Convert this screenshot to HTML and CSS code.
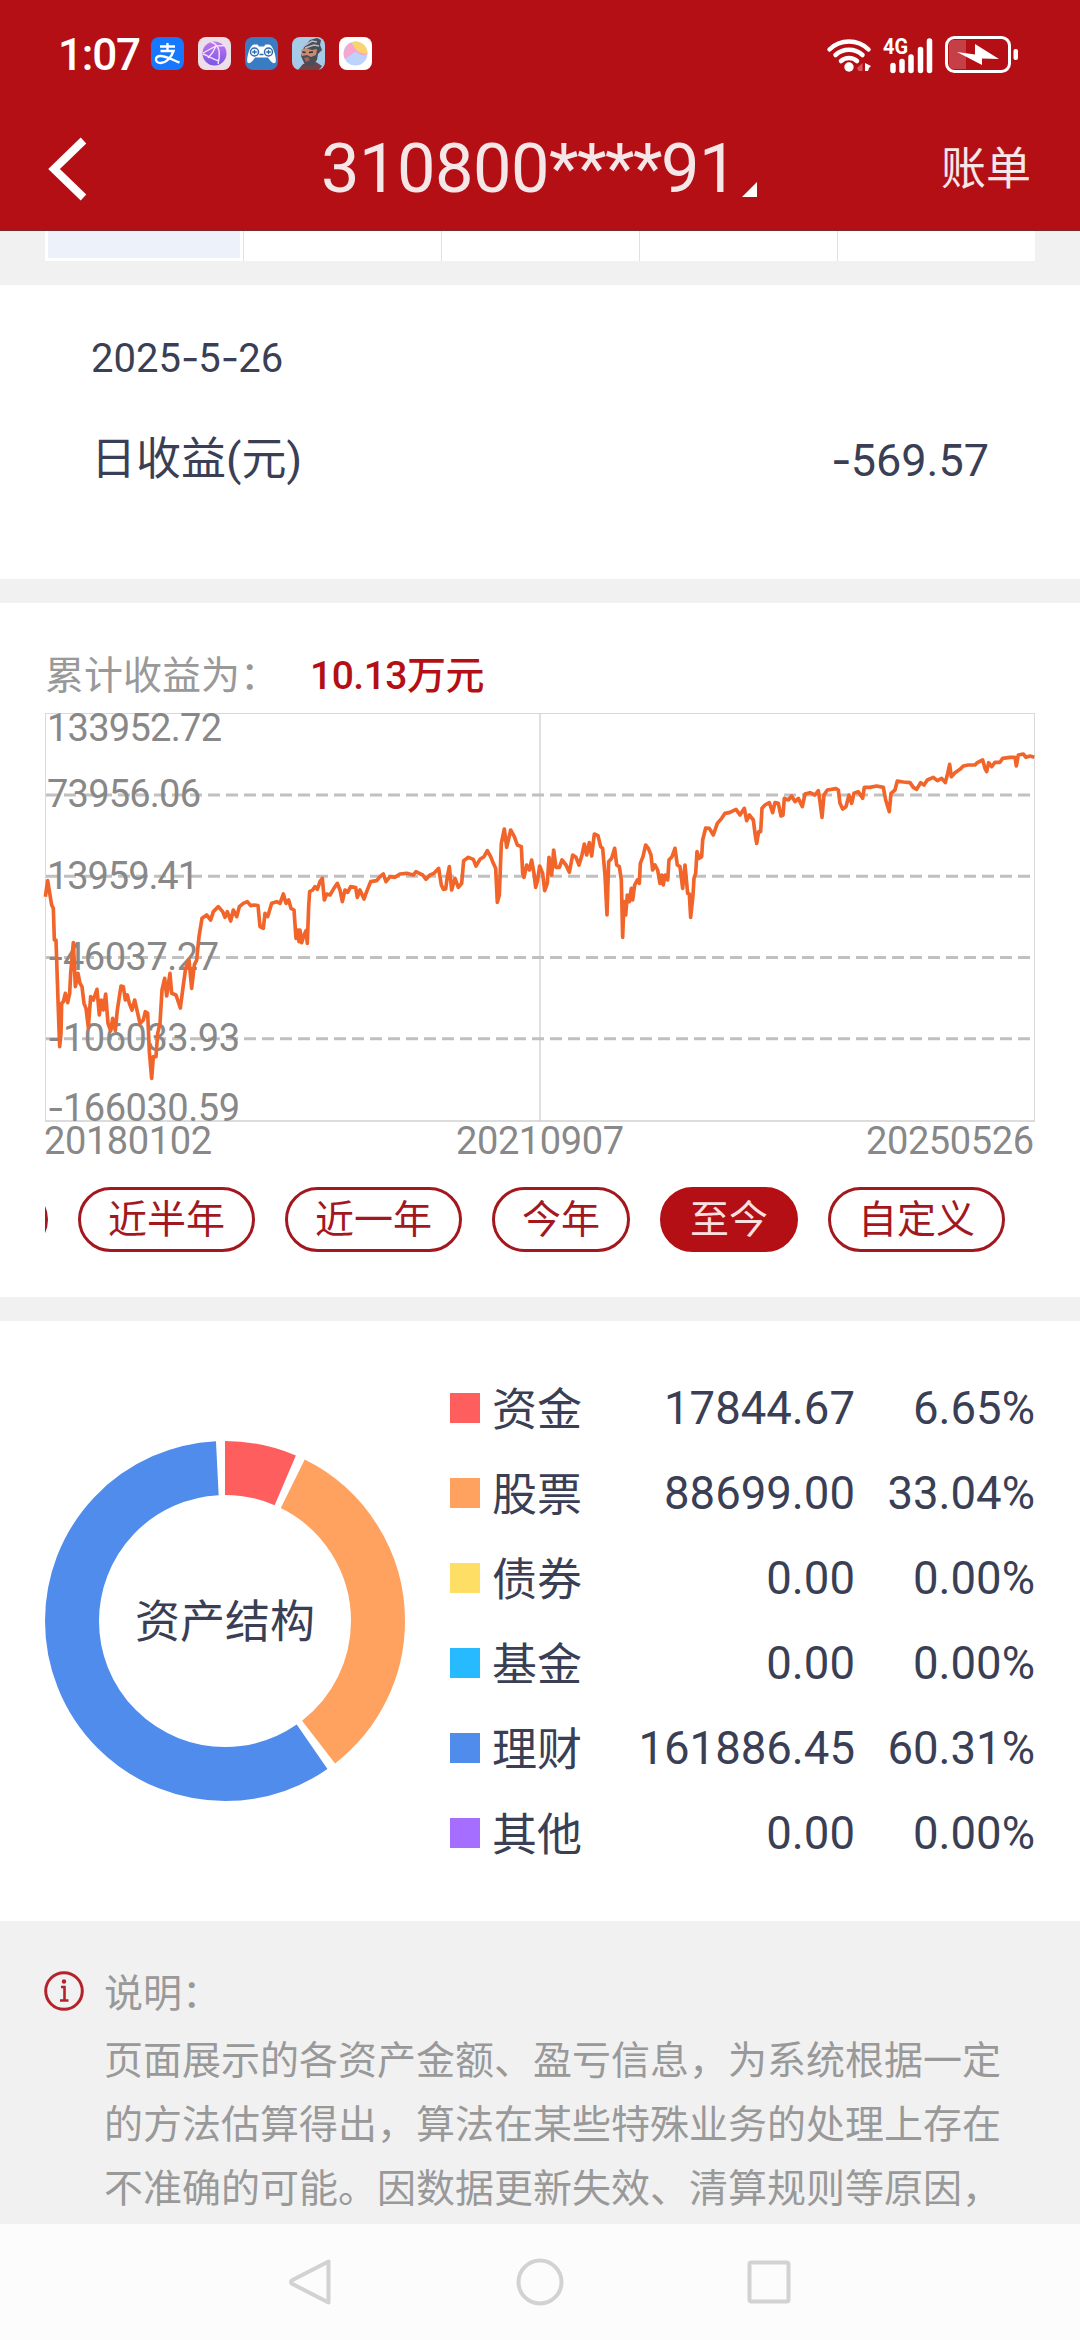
FILE: index.html
```html
<!DOCTYPE html>
<html lang="zh-CN">
<head>
  <meta charset="UTF-8">
  <meta name="viewport" content="width=device-width, initial-scale=1.0">
  <title>账单</title>
  <link rel="stylesheet" href="styles.css">
</head>
<body>
  <header class="header">
    <div class="status-bar">
      <span class="time">1:07</span>
      <div class="apps">
        <svg viewBox="0 0 33 33">
          <rect width="33" height="33" rx="8" fill="#1677ff"/>
          <path d="M9 9.500h15M16.500 6v8M9.500 14h13c-2 6-7 12-13 12-6 0-6-7 0-7 6 0 12 4 19 6.500" fill="none" stroke="#fff" stroke-width="2.400"/>
        </svg>
        <svg viewBox="0 0 33 33">
          <rect width="33" height="33" rx="8" fill="#ecdfe9"/>
          <circle cx="16.500" cy="16.500" r="12" fill="url(#globe)"/>
          <path d="M5 16L18 9l9.500-.500M5 17c5 2 10 5 16 7M13 5c3 1 5 2.500 6 4 3 4 3 10 1 18M18 9c-2 5-4 8-8 12" fill="none" stroke="#f1e4fb" stroke-width="1.400"/>
          <defs>
            <linearGradient id="globe" x1="0" y1="0" x2="0" y2="1">
              <stop offset="0" stop-color="#c277f0"/>
              <stop offset="1" stop-color="#7b55e6"/>
            </linearGradient>
          </defs>
        </svg>
        <svg viewBox="0 0 33 33">
          <rect width="33" height="33" rx="8" fill="#3a7cc4"/>
          <path d="M9 7.500h3.500l1.500 2h5l1.500-2H24c4 0 8 14 6.500 18-2 2-5-1-7.500-5H10c-2.500 4-5.500 7-7.500 5C1 21.500 5 7.500 9 7.500z" fill="#fff"/>
          <circle cx="9.500" cy="15" r="4" fill="#fff" stroke="#2f6bb0" stroke-width="1.500"/>
          <circle cx="23.500" cy="15" r="4" fill="#fff" stroke="#2f6bb0" stroke-width="1.500"/>
          <path d="M9.500 12.700v4.600M7.200 15h4.600M23.500 12.700v4.600M21.200 15h4.600M14.500 17.500h4" stroke="#2f6bb0" stroke-width="1.300"/>
        </svg>
        <svg viewBox="0 0 33 33">
          <rect width="33" height="33" rx="8" fill="#a5cbe8"/>
          <path d="M6 33l5-6 13-2 6 4-3 4z" fill="#6b454a"/>
          <path d="M12 10l6-7 7-2 4 2-1 5 2 5-4 4-1 6-5 6-7-1-4-9z" fill="#4a4e57"/>
          <path d="M9 13l5-2 6 2 5-1-1 6-5 2-4-2-5 1z" fill="#c98a72"/>
          <path d="M12 9l8-5 5 1M13 11l9-3 5 1" stroke="#b7bcc3" stroke-width="1.500" fill="none"/>
          <path d="M10.500 15l3 .500M17 15.500l4-.500" stroke="#33282b" stroke-width="1.500"/>
          <path d="M12 21l4-1 2 3-4 2z" fill="#a9615a"/>
        </svg>
        <svg viewBox="0 0 33 33">
          <rect width="33" height="33" rx="8" fill="#fff"/>
          <circle cx="16.500" cy="16.500" r="12" fill="#bcd3fb"/>
          <path d="M12 5.500c4 6 8 10 16.500 11-3 4-8 1-12-2L6 22C3 16 6 8 12 5.500z" fill="#f6a6cf"/>
          <path d="M13 5a12 12 0 0 1 15.500 11C21 18 15 12 13 5z" fill="#fbd36f"/>
        </svg>
      </div>
      <svg class="signals" viewBox="820 30 205 46">
        <g fill="none" stroke="#fff" stroke-width="4.500" stroke-linecap="round">
          <path d="M829.500 48.500a28 28 0 0 1 39 0M835.500 54a20 20 0 0 1 27 0M841 60a12 12 0 0 1 16 0"/>
          <path d="M893 64.500v5M902 60.500v9M911 56v13.500M920.500 48.500v21M929.500 40v29.500" stroke-width="5.500"/>
          <rect x="946.500" y="36.500" width="63" height="34" rx="8" stroke-width="3"/>
        </g>
        <circle cx="849" cy="66" r="4.700" fill="#fff"/>
        <path d="M862.500 62v8h-4l-1.500-3z" fill="#d9555a"/>
        <path d="M865 62l6 3-2 2-1 3h-3z" fill="#fff"/>
        <path d="M954 39h12v29h-12q-5 0-5-5V44q0-5 5-5z" fill="#c63f47"/>
        <path d="M957 51l18 2.500V43l24 15-17-.500V64z" fill="#fff"/>
        <rect x="1013.500" y="48" width="4.500" height="11" rx="2" fill="#fff"/>
        <text x="883" y="53" textLength="25" lengthAdjust="spacingAndGlyphs" class="net">4G</text>
      </svg>
    </div>
    <div class="title-bar">
      <svg class="back" viewBox="45 134 45 68">
        <path d="M83.500 139.500L54 168l29.500 28.500" fill="none" stroke="#fff" stroke-width="8"/>
      </svg>
      <h1>310800<span class="stars">****</span>91<svg class="more" viewBox="0 0 15 15"><path d="M15 0v15H0z" fill="#fff"/></svg></h1>
      <a class="bill">账单</a>
    </div>
  </header>

  <div class="tabs">
    <span class="active"></span><span></span><span></span><span></span><span></span>
  </div>

  <section class="daily">
    <p class="date">2025<span class="dash">-</span>5<span class="dash">-</span>26</p>
    <div class="daily-row">
      <span>日收益(元)</span>
      <span><span class="dash">-</span>569.57</span>
    </div>
  </section>

  <section class="profit">
    <p class="total">累计收益为：<b>10.13万元</b></p>
    <svg class="chart" viewBox="0 706 1080 456">
      <rect x="45.500" y="713.500" width="989" height="407.500" fill="none" stroke="#dadada"/>
      <path d="M540 713v408M45 1121h990" stroke="#ccc" stroke-width="1.200"/>
      <path d="M46 795h988M46 876.300h988M46 957.600h988M46 1038.800h988" stroke="#c0c0c0" stroke-width="3" stroke-dasharray="12 6"/>
      <g class="axis">
        <text x="47" y="741" textLength="175">133952.72</text>
        <text x="47" y="807" textLength="154">73956.06</text>
        <text x="47" y="889" textLength="152">13959.41</text>
        <text x="47" y="970" textLength="172"><tspan class="dash">-</tspan>46037.27</text>
        <text x="47" y="1051" textLength="193"><tspan class="dash">-</tspan>106033.93</text>
        <text x="47" y="1121" textLength="193"><tspan class="dash">-</tspan>166030.59</text>
        <text x="44" y="1154" textLength="168">20180102</text>
        <text x="456" y="1154" textLength="168">20210907</text>
        <text x="866" y="1154" textLength="168">20250526</text>
      </g>
      <polyline class="line" transform="translate(0 640) scale(.33333)" points="
        136,770 143,722 150,765 155,795 160,805 163,900 168,900 172,1020 175,1110 179,1220 183,1180 185,1090 190,1085 196,1060
        203,1088 209,1060 212,1000 220,908 226,1040 234,1000 240,1030 246,1040 252,1090 258,1105 265,1162 272,1070 280,1080
        291,1048 298,1125 304,1080 310,1110 317,1062 324,1150 332,1172 338,1135 346,1172 352,1110 363,1038 370,1040 376,1080 382,1065 388,1090
        396,1110 404,1080 412,1115 420,1150 430,1140 436,1115 443,1120 448,1235 455,1315 460,1250 468,1250 473,1180 480,1150
        486,1050 494,1015 500,1068 510,1000 515,1060 528,1065 541,1104 548,1050 557,985 567,960 575,1045 583,975 590,960
        597,890 606,835 620,825 632,840 640,815 655,800 668,815 675,832 682,815 692,843 700,810 710,830 718,800 730,790 742,785 752,797
        762,795 774,797 780,860 790,865 795,820 803,830 815,790 830,785 840,790 850,762 858,790 866,780 873,805 882,810
        888,895 894,870 897,905 900,870 905,908 912,885 918,872 922,910 926,800 929,755 938,750 945,740 952,748 960,725
        967,715 973,780 980,762 990,765 1000,748 1012,730 1020,750 1027,785 1035,750 1043,757 1052,740 1067,743 1072,772
        1080,750 1092,777 1100,755 1112,725 1130,722 1140,710 1150,702 1158,725 1170,710 1185,712 1200,702 1220,700 1240,705
        1248,695 1258,700 1268,705 1278,718 1290,705 1302,700 1316,685 1324,735 1330,748 1337,747 1342,710 1348,680 1355,750
        1365,715 1375,742 1385,730 1391,662 1405,652 1420,658 1428,678 1440,658 1452,650 1462,632 1472,650 1480,670 1487,685
        1492,787 1498,765 1504,610 1513,567 1520,622 1532,570 1543,590 1552,615 1564,620 1568,700 1572,712 1580,675 1588,690
        1595,660 1602,700 1607,742 1613,720 1619,678 1628,700 1634,752 1642,730 1647,652 1655,705 1661,630 1668,682 1678,682
        1686,660 1698,675 1708,697 1718,645 1728,652 1737,675 1746,645 1753,612 1760,645 1768,608 1775,648 1783,582 1794,587
        1802,620 1808,625 1815,705 1821,825 1826,665 1835,655 1844,625 1850,675 1858,680 1864,720 1868,892 1872,785 1877,825
        1882,765 1888,785 1894,745 1898,780 1904,735 1912,720 1918,730 1921,670 1929,650 1937,615 1945,625 1953,645 1958,690
        1965,675 1973,690 1980,730 1985,705 1990,735 1995,705 2003,720 2007,660 2016,650 2025,625 2032,675 2040,680 2048,745 2055,675
        2063,760 2068,762 2072,832 2079,765 2082,715 2087,700 2091,635 2098,655 2105,650 2108,600 2117,564 2128,565 2140,585
        2152,550 2165,535 2175,520 2190,517 2208,508 2220,525 2233,505 2240,542 2248,525 2260,540 2265,580 2270,610 2276,575
        2282,575 2286,505 2295,495 2308,488 2318,518 2325,488 2335,490 2343,528 2349,525 2353,475 2365,480 2375,468 2385,485
        2395,475 2407,500 2415,462 2430,458 2445,465 2455,452 2460,485 2466,532 2472,465 2482,450 2508,446 2515,450 2520,490
        2528,507 2538,500 2547,465 2555,490 2562,460 2575,455 2588,475 2593,442 2610,442 2630,438 2650,442 2657,480 2668,515
        2673,460 2685,450 2692,423 2710,426 2730,428 2740,442 2750,448 2762,428 2772,435 2782,420 2800,412 2812,422 2825,415
        2836,428 2843,400 2849,373 2854,410 2865,398 2880,388 2890,378 2905,375 2925,375 2932,368 2948,360 2955,385 2960,395
        2966,368 2975,380 2985,367 3000,367 3008,355 3030,352 3045,352 3049,378 3055,345 3070,342 3078,352 3090,348 3103,352"/>
    </svg>
    <div class="ranges">
      <a>近三月</a>
      <a>近半年</a>
      <a>近一年</a>
      <a class="short">今年</a>
      <a class="short active">至今</a>
      <a>自定义</a>
    </div>
  </section>

  <section class="assets">
    <svg class="donut" viewBox="0 0 360 360">
      <g fill="none" stroke-width="54" transform="rotate(-90 180 180)">
        <circle cx="180" cy="180" r="153" pathLength="360" stroke="#ff5e5e" stroke-dasharray="23.200 336.800"/>
        <circle cx="180" cy="180" r="153" pathLength="360" stroke="#ffa15f" stroke-dasharray="116 244" stroke-dashoffset="-26.300"/>
        <circle cx="180" cy="180" r="153" pathLength="360" stroke="#508cec" stroke-dasharray="211.800 148.200" stroke-dashoffset="-145.300"/>
      </g>
      <text x="180" y="197" text-anchor="middle">资产结构</text>
    </svg>
    <ul class="legend">
      <li><i class="cash"></i><span class="name">资金</span><span>17844.67</span><span>6.65%</span></li>
      <li><i class="stock"></i><span class="name">股票</span><span>88699.00</span><span>33.04%</span></li>
      <li><i class="bond"></i><span class="name">债券</span><span>0.00</span><span>0.00%</span></li>
      <li><i class="fund"></i><span class="name">基金</span><span>0.00</span><span>0.00%</span></li>
      <li><i class="wealth"></i><span class="name">理财</span><span>161886.45</span><span>60.31%</span></li>
      <li><i class="other"></i><span class="name">其他</span><span>0.00</span><span>0.00%</span></li>
    </ul>
  </section>

  <section class="notes">
    <svg class="info" viewBox="0 0 40 40">
      <circle cx="20" cy="20" r="18.300" fill="none" stroke="#b5232a" stroke-width="3"/>
      <circle cx="20" cy="10.500" r="2.200" fill="#b5232a"/>
      <path d="M17 16h3.500v13M16 29.500h8.500" fill="none" stroke="#b5232a" stroke-width="2.600"/>
    </svg>
    <div>
      <h2>说明：</h2>
      <p>页面展示的各资产金额、盈亏信息，为系统根据一定<br>的方法估算得出，算法在某些特殊业务的处理上存在<br>不准确的可能。因数据更新失效、清算规则等原因，</p>
    </div>
  </section>

  <nav class="nav">
    <svg viewBox="0 0 50 50"><path d="M42.500 4.500v41L6.500 27q-3-2 0-4z" fill="none" stroke="#d2d2d2" stroke-width="4" stroke-linejoin="round"/></svg>
    <svg viewBox="0 0 50 50"><circle cx="25" cy="25" r="21.500" fill="none" stroke="#d2d2d2" stroke-width="4"/></svg>
    <svg viewBox="0 0 50 50"><rect x="5.500" y="5.500" width="39" height="39" rx="2" fill="none" stroke="#d2d2d2" stroke-width="4"/></svg>
  </nav>
</body>
</html>
```
FILE: styles.css
```css
* {
  box-sizing: border-box;
  margin: 0;
  padding: 0;
}
body {
  width: 1080px;
  height: 2340px;
  overflow: hidden;
  background-color: #f1f1f1;
  color: #3a3f55;
  font-family: Roboto, "Noto Sans CJK SC", sans-serif;
  font-size: 45px;
}
svg {
  display: block;
}
section {
  background-color: #fff;
}
.dash {
  font-family: Inter, sans-serif;
  letter-spacing: -1px;
}

/* header */
.header {
  height: 231px;
  background-color: #b40f15;
  border-bottom: 1px solid #7a2a2d;
  color: #f5e6e7;
}
.status-bar {
  display: flex;
  align-items: center;
  height: 107px;
  padding: 0 55px 0 58px;
}
.time {
  width: 93px;
  padding-top: 2px;
  color: #fff;
  font-size: 44px;
  font-weight: 500;
  letter-spacing: -1.2px;
}
.apps {
  display: flex;
  flex: 1;
  gap: 14px;
}
.apps svg {
  width: 33px;
  height: 33px;
}
.signals {
  width: 205px;
  height: 46px;
}
.net {
  fill: #fff;
  font-size: 22px;
  font-weight: 700;
}
.title-bar {
  display: grid;
  grid-template-columns: 150px 1fr 150px;
  align-items: center;
  height: 123px;
  padding: 0 49px 0 45px;
}
.back {
  width: 45px;
  height: 68px;
}
.title-bar h1 {
  display: flex;
  align-items: flex-end;
  justify-content: center;
  height: 80px;
  padding: 2px 0 0 2px;
  font-size: 68.5px;
  font-weight: 400;
  line-height: 80px;
  letter-spacing: -0.5px;
}
.stars {
  padding-top: 4px;
  letter-spacing: -1.5px;
}
.more {
  width: 15px;
  height: 15px;
  margin: 0 0 12px 5px;
}
.bill {
  margin-top: -6px;
  text-align: right;
}

/* bottom edge of the calendar table */
.tabs {
  display: grid;
  grid-template-columns: repeat(5, 1fr);
  height: 30px;
  margin: 0 45px 24px;
  background-color: #fff;
}
.tabs span + span {
  border-left: 1px solid #e0e0e0;
}
.tabs .active {
  margin: 0 3px 3px;
  background-color: #edf2fa;
}

.daily {
  height: 294px;
  margin-bottom: 24px;
  padding: 43px 91px 0;
}
.date {
  font-size: 40px;
  line-height: 60px;
}
.daily-row {
  display: flex;
  justify-content: space-between;
  margin-top: 41px;
  line-height: 60px;
}

/* profit chart */
.profit {
  height: 694px;
  margin-bottom: 24px;
  padding-top: 43px;
}
.total {
  height: 60px;
  padding-left: 45px;
  color: #999;
  font-size: 39px;
  line-height: 60px;
}
.total b {
  margin-left: 31px;
  color: #b40f15;
  font-weight: 500;
  letter-spacing: -0.5px;
}
.chart {
  width: 1080px;
  height: 456px;
}
.axis {
  fill: #888;
  font-size: 38px;
}
.line {
  fill: none;
  stroke: #f2652a;
  stroke-width: 11px;
  stroke-linejoin: round;
}
.ranges {
  display: flex;
  gap: 30px;
  margin: 25px 45px 0;
  overflow: hidden;
}
.ranges a {
  flex: none;
  width: 177px;
  height: 65px;
  border: 3px solid #a3181e;
  border-radius: 33px;
  color: #a3181e;
  font-size: 39px;
  line-height: 61px;
  text-align: center;
}
.ranges a:first-child {
  margin-left: -174px;
}
.ranges .short {
  width: 138px;
}
.ranges .active {
  border-color: #b40f15;
  background-color: #b40f15;
  color: #f9dfe0;
}

/* asset structure */
.assets {
  display: flex;
  align-items: center;
  gap: 45px;
  height: 600px;
  padding: 0 45px;
}
.donut {
  width: 360px;
  height: 360px;
}
.donut text {
  fill: #3a3f55;
}
.legend {
  flex: 1;
  margin-bottom: 1px;
  list-style: none;
}
.legend li {
  display: grid;
  grid-template-columns: 42px 100px 1fr 180px;
  align-items: center;
  height: 85px;
  line-height: 60px;
}
.legend i {
  width: 30px;
  height: 30px;
}
.legend span {
  padding-top: 2px;
  font-size: 45.5px;
  text-align: right;
}
.legend .name {
  padding-top: 5px;
  font-size: 45px;
  text-align: left;
}
.cash { background-color: #ff5e5e; }
.stock { background-color: #ffa15f; }
.bond { background-color: #ffde66; }
.fund { background-color: #27baff; }
.wealth { background-color: #508cec; }
.other { background-color: #a56eff; }

.notes {
  display: flex;
  height: 303px;
  padding: 41px 44px 0;
  overflow: hidden;
  background-color: #f1f1f1;
  color: #999;
  font-size: 39px;
}
.info {
  width: 40px;
  height: 40px;
  margin: 9px 20px 0 0;
}
.notes h2 {
  height: 66px;
  padding-top: 2px;
  font-size: 39px;
  font-weight: 400;
  line-height: 60px;
}
.notes p {
  padding-top: 1px;
  line-height: 64px;
  white-space: nowrap;
}

.nav {
  display: flex;
  justify-content: center;
  gap: 179px;
  height: 116px;
  padding-top: 33px;
  background-color: #fcfcfc;
}
.nav svg {
  width: 50px;
  height: 50px;
}
```
